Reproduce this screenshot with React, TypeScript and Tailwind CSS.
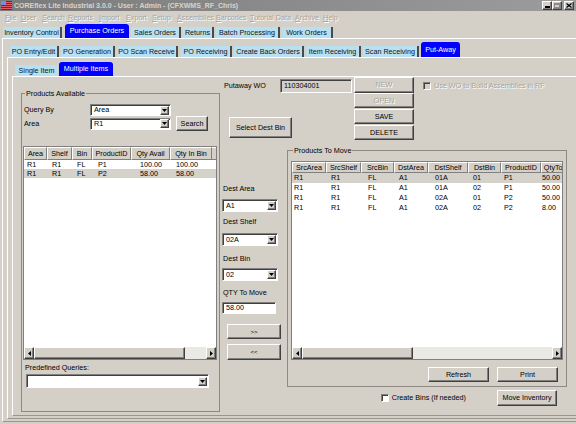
import React from "react";

const RAISED =
  "bg-[#d4d0c8] border border-t-white border-l-white border-r-[#404040] border-b-[#404040] shadow-[inset_-1px_-1px_0_#808080]";
const SUNKEN =
  "border border-t-[#808080] border-l-[#808080] border-r-white border-b-white shadow-[inset_1px_1px_0_#404040]";
const DISABLED_TXT = "text-[#a8a49c] [text-shadow:1px_1px_0_#ffffff]";

function DownArrow() {
  return (
    <svg width="5" height="3" viewBox="0 0 5 3">
      <path d="M0 0H5L2.5 3Z" fill="#000" />
    </svg>
  );
}
function LeftArrow() {
  return (
    <svg width="3" height="5" viewBox="0 0 3 5">
      <path d="M3 0V5L0 2.5Z" fill="#000" />
    </svg>
  );
}
function RightArrow() {
  return (
    <svg width="3" height="5" viewBox="0 0 3 5">
      <path d="M0 0V5L3 2.5Z" fill="#000" />
    </svg>
  );
}

function Combo({ value, className }: { value: string; className: string }) {
  return (
    <div className={`flex items-center bg-white shrink-0 ${SUNKEN} ${className}`}>
      <span className="flex-1 pl-[3px] whitespace-nowrap overflow-hidden">{value}</span>
      <div className={`w-[9px] h-[9px] mr-[1px] flex items-center justify-center shrink-0 ${RAISED}`}>
        <DownArrow />
      </div>
    </div>
  );
}

function Btn({
  children,
  className,
  disabled,
}: {
  children: React.ReactNode;
  className: string;
  disabled?: boolean;
}) {
  return (
    <div
      className={`flex items-center justify-center whitespace-nowrap shrink-0 ${RAISED} ${
        disabled ? DISABLED_TXT : "text-black"
      } ${className}`}
    >
      {children}
    </div>
  );
}

function Check({ disabled }: { disabled?: boolean }) {
  return (
    <div
      className={`w-[8px] h-[8px] shrink-0 ${disabled ? "bg-[#d4d0c8]" : "bg-white"} ${SUNKEN}`}
    />
  );
}

type TabDef = { label: string; cls: string; active?: boolean; sep?: boolean };

function Tab({ t }: { t: TabDef }) {
  if (t.active)
    return (
      <div
        className={`h-full flex items-center justify-center whitespace-nowrap shrink-0 bg-[#0000ff] text-white rounded-t-[3px] ${t.cls}`}
      >
        {t.label}
      </div>
    );
  return (
    <div
      className={`h-[11px] flex items-center justify-center whitespace-nowrap shrink-0 bg-[#b9e0f1] text-[#111] ${
        t.sep === false ? "" : "border-r-2 border-r-[#4a4a4a]"
      } ${t.cls}`}
    >
      {t.label}
    </div>
  );
}

const MAIN_TABS: TabDef[] = [
  { label: "Inventory Control", cls: "w-[59px] mr-[3px]" },
  { label: "Purchase Orders", cls: "w-[64px] mr-[2px]", active: true },
  { label: "Sales Orders", cls: "w-[50px] mr-[2px]" },
  { label: "Returns", cls: "w-[31px] mr-[2px]" },
  { label: "Batch Processing", cls: "w-[64px] mr-[2px]" },
  { label: "Work Orders", cls: "w-[51px]" },
];

const SUB_TABS: TabDef[] = [
  { label: "PO Entry/Edit", cls: "w-[49px] mr-[2px]" },
  { label: "PO Generation", cls: "w-[54px] mr-[2px]" },
  { label: "PO Scan Receive", cls: "w-[61px] mr-[3px]" },
  { label: "PO Receiving", cls: "w-[51px] mr-[2px]" },
  { label: "Create Back Orders", cls: "w-[70px] mr-[2px]" },
  { label: "Item Receiving", cls: "w-[55px] mr-[2px]" },
  { label: "Scan Receiving", cls: "w-[56px] mr-[2px]" },
  { label: "Put-Away", cls: "w-[39px]", active: true },
];

const ITEM_TABS: TabDef[] = [
  { label: "Single Item", cls: "w-[43px] mr-[1px]", sep: false },
  { label: "Multiple Items", cls: "w-[54px]", active: true },
];

const MENU: [string, string][] = [
  ["File", "w-[16px]"],
  ["User", "w-[21px]"],
  ["Search", "w-[26px]"],
  ["Reports", "w-[31px]"],
  ["Import", "w-[27px]"],
  ["Export", "w-[26px]"],
  ["Setup", "w-[25px]"],
  ["Assemblies", "w-[39px]"],
  ["Barcodes", "w-[34px]"],
  ["Tutorial Data", "w-[45px]"],
  ["Archive", "w-[28px]"],
  ["Help", "w-[20px]"],
];

type Col = { label: string; w: string; pl: string };

function Table({
  cols,
  rows,
  sel,
  headH,
  rowH,
  thumb,
  className,
}: {
  cols: Col[];
  rows: string[][];
  sel: number;
  headH: string;
  rowH: string;
  thumb: string;
  className: string;
}) {
  const cellHead =
    "h-full flex items-center justify-center whitespace-nowrap overflow-hidden shrink-0 border border-t-white border-l-white border-r-[#808080] border-b-[#808080]";
  return (
    <div className={`flex flex-col bg-white border border-[#808080] overflow-hidden shrink-0 ${className}`}>
      <div className={`flex shrink-0 bg-[#d4d0c8] overflow-hidden ${headH}`}>
        {cols.map((c) => (
          <div key={c.label} className={`${cellHead} ${c.w}`}>
            {c.label}
          </div>
        ))}
        <div className="flex-1 h-full border-t border-t-white border-b border-b-[#808080]" />
      </div>
      {rows.map((r, i) => (
        <div
          key={i}
          className={`flex shrink-0 overflow-hidden ${rowH} ${i === sel ? "bg-[#d5d2cc]" : "bg-white"}`}
        >
          {r.map((v, j) => (
            <div
              key={j}
              className={`${cols[j].w} ${cols[j].pl} shrink-0 flex items-center whitespace-nowrap overflow-hidden`}
            >
              {v}
            </div>
          ))}
        </div>
      ))}
      <div className="flex-1" />
      <div className="h-[12px] flex shrink-0 bg-[#ebe9e5]">
        <div className={`w-[10px] h-full flex items-center justify-center shrink-0 ${RAISED}`}>
          <LeftArrow />
        </div>
        <div className={`${thumb} h-full shrink-0 ${RAISED}`} />
        <div className="flex-1" />
        <div className={`w-[10px] h-full flex items-center justify-center shrink-0 ${RAISED}`}>
          <RightArrow />
        </div>
      </div>
    </div>
  );
}

const LEFT_COLS: Col[] = [
  { label: "Area", w: "w-[23px]", pl: "pl-[3px]" },
  { label: "Shelf", w: "w-[25px]", pl: "pl-[5px]" },
  { label: "Bin", w: "w-[20px]", pl: "pl-[5px]" },
  { label: "ProductID", w: "w-[39px]", pl: "pl-[6px]" },
  { label: "Qty Avail", w: "w-[39px]", pl: "pl-[9px]" },
  { label: "Qty In Bin", w: "w-[42px]", pl: "pl-[6px]" },
];
const LEFT_ROWS = [
  ["R1", "R1", "FL", "P1", "100.00", "100.00"],
  ["R1", "R1", "FL", "P2", "58.00", "58.00"],
];

const RIGHT_COLS: Col[] = [
  { label: "SrcArea", w: "w-[34px]", pl: "pl-[2px]" },
  { label: "SrcShelf", w: "w-[35px]", pl: "pl-[5px]" },
  { label: "SrcBin", w: "w-[33px]", pl: "pl-[7px]" },
  { label: "DstArea", w: "w-[34px]", pl: "pl-[5px]" },
  { label: "DstShelf", w: "w-[40px]", pl: "pl-[7px]" },
  { label: "DstBin", w: "w-[33px]", pl: "pl-[5px]" },
  { label: "ProductID", w: "w-[40px]", pl: "pl-[3px]" },
  { label: "QtyToMove", w: "w-[42px]", pl: "pl-[1px]" },
];
const RIGHT_ROWS = [
  ["R1", "R1", "FL", "A1", "01A", "01", "P1", "50.00"],
  ["R1", "R1", "FL", "A1", "01A", "02", "P1", "50.00"],
  ["R1", "R1", "FL", "A1", "02A", "01", "P2", "50.00"],
  ["R1", "R1", "FL", "A1", "02A", "02", "P2", "8.00"],
];

function TitleBar() {
  return (
    <div className="h-[11px] shrink-0 flex items-center bg-gradient-to-r from-[#7b7b7b] to-[#9c9c9c]">
      <svg width="11" height="9" viewBox="0 0 11 9" className="ml-[1px] shrink-0">
        <rect width="11" height="9" fill="#1c3c9c" />
        <rect x="0" y="0" width="5" height="4" fill="#7090e8" />
        <path d="M5 1.5H11M5 3.5H11M0 5.5H11M0 7.5H11" stroke="#e05a6a" strokeWidth="1" />
      </svg>
      <span className="ml-[2px] font-bold text-[7px] text-[#d8d4cc] whitespace-nowrap">
        COREflex Lite Industrial 3.0.0 - User : Admin - (CFXWMS_RF_Chris)
      </span>
      <div className="flex-1" />
      <div className={`w-[10px] h-[9px] flex items-end justify-center pb-[1px] ${RAISED}`}>
        <div className="w-[5px] h-[2px] bg-black" />
      </div>
      <div className={`w-[10px] h-[9px] flex items-center justify-center ${RAISED}`}>
        <div className="w-[6px] h-[5px] border border-[#8a8a8a] border-t-2" />
      </div>
      <div className={`w-[10px] h-[9px] ml-[2px] mr-[2px] flex items-center justify-center ${RAISED}`}>
        <svg width="6" height="5" viewBox="0 0 6 5">
          <path d="M0.5 0.5L5.5 4.5M5.5 0.5L0.5 4.5" stroke="#000" strokeWidth="1.3" />
        </svg>
      </div>
    </div>
  );
}

function MenuBar() {
  return (
    <div className="h-[13px] shrink-0 flex items-center pl-[5px]">
      {MENU.map(([m, w]) => (
        <span key={m} className={`${w} shrink-0 whitespace-nowrap ${DISABLED_TXT}`}>
          <span className="underline">{m[0]}</span>
          {m.slice(1)}
        </span>
      ))}
    </div>
  );
}

export default function App() {
  return (
    <div className="w-[576px] h-[424px] bg-[#d4d0c8] flex flex-col overflow-hidden font-['Liberation_Sans',Arial,sans-serif] text-[7.2px] leading-none text-black select-none">
      <TitleBar />
      <MenuBar />
      <div className="h-[14px] shrink-0 flex items-end pl-[3px]">
        {MAIN_TABS.map((t) => (
          <Tab key={t.label} t={t} />
        ))}
      </div>
      <div className="flex-1 min-h-0 flex flex-col ml-[2px] mb-[2px] border-t border-l border-t-white border-l-white border-b border-b-[#9a968e]">
        <div className="h-[15px] mt-[3px] shrink-0 flex items-end pl-[7px]">
          {SUB_TABS.map((t) => (
            <Tab key={t.label} t={t} />
          ))}
        </div>
        <div className="flex-1 min-h-0 flex flex-col ml-[4px] mb-[2px] border-t border-l border-t-white border-l-white border-b border-b-[#9a968e]">
          <div className="h-[14px] mt-[4px] shrink-0 flex items-end pl-[7px]">
            {ITEM_TABS.map((t) => (
              <Tab key={t.label} t={t} />
            ))}
          </div>
          <div className="flex-1 min-h-0 flex ml-[4px] mb-[2px] border-t border-l border-t-white border-l-white border-b border-b-[#9a968e]">
            {/* Products Available */}
            <fieldset className="ml-[8px] mt-[12px] w-[199px] h-[323px] shrink-0 border border-[#8e8a83]">
              <legend className="ml-[3px] px-[1px] leading-[9px]">Products Available</legend>
              <div className="flex flex-col px-[1px]">
                <div className="flex items-center h-[12px] mt-[6px]">
                  <span className="w-[67px] pl-[1px] shrink-0">Query By</span>
                  <Combo value="Area" className="w-[81px] h-[12px]" />
                </div>
                <div className="flex items-center h-[15px]">
                  <span className="w-[67px] pl-[1px] shrink-0">Area</span>
                  <Combo value="R1" className="w-[81px] h-[12px]" />
                  <Btn className="ml-[5px] w-[32px] h-[15px]">Search</Btn>
                </div>
                <Table
                  cols={LEFT_COLS}
                  rows={LEFT_ROWS}
                  sel={1}
                  headH="h-[13px]"
                  rowH="h-[9px]"
                  thumb="w-[151px]"
                  className="mt-[15px] w-[194px] h-[214px]"
                />
                <span className="mt-[3px] h-[9px] pl-[2px] flex items-center">Predefined Queries:</span>
                <Combo value="" className="mt-[2px] ml-[3px] w-[183px] h-[14px]" />
              </div>
            </fieldset>

            {/* Right side */}
            <div className="flex-1 flex flex-col min-w-0">
              <div className="flex h-[63px] shrink-0">
                <div className="w-[134px] shrink-0 flex flex-col">
                  <div className="mt-[2px] h-[14px] flex items-center">
                    <span className="w-[60px] pl-[4px] shrink-0">Putaway WO</span>
                    <div className={`w-[72px] h-[14px] flex items-center pl-[3px] bg-[#d4d0c8] ${SUNKEN}`}>
                      110304001
                    </div>
                  </div>
                  <Btn className="mt-[24px] ml-[9px] w-[63px] h-[21px]">Select Dest Bin</Btn>
                </div>
                <div className="w-[60px] shrink-0 flex flex-col">
                  <Btn disabled className="w-[60px] h-[16px]">
                    NEW
                  </Btn>
                  <Btn disabled className="w-[60px] h-[15px]">
                    OPEN
                  </Btn>
                  <Btn className="mt-[1px] w-[60px] h-[15px]">SAVE</Btn>
                  <Btn className="mt-[1px] w-[60px] h-[15px]">DELETE</Btn>
                </div>
                <div className="ml-[9px] mt-[4px] h-[9px] flex items-center gap-[3px]">
                  <Check disabled />
                  <span className={`whitespace-nowrap ${DISABLED_TXT}`}>Use WO to Build Assemblies in RF</span>
                </div>
              </div>

              <div className="flex flex-1 min-h-0">
                <div className="ml-[2px] w-[60px] shrink-0 flex flex-col pt-[44px]">
                  <span className="h-[9px] pl-[1px] flex items-center">Dest Area</span>
                  <Combo value="A1" className="mt-[6px] w-[56px] h-[13px]" />
                  <span className="mt-[5px] h-[9px] pl-[1px] flex items-center">Dest Shelf</span>
                  <Combo value="02A" className="mt-[7px] w-[56px] h-[13px]" />
                  <span className="mt-[8px] h-[9px] pl-[1px] flex items-center">Dest Bin</span>
                  <Combo value="02" className="mt-[5px] w-[56px] h-[13px]" />
                  <span className="mt-[7px] h-[9px] pl-[1px] flex items-center">QTY To Move</span>
                  <div className={`mt-[5px] w-[54px] h-[12px] bg-white flex items-center pl-[3px] ${SUNKEN}`}>
                    58.00
                  </div>
                  <Btn className="mt-[10px] ml-[5px] w-[54px] h-[15px] text-[6px]">&gt;&gt;</Btn>
                  <Btn className="mt-[5px] ml-[5px] w-[54px] h-[16px] text-[6px]">&lt;&lt;</Btn>
                </div>

                <div className="ml-[5px] w-[280px] shrink-0 flex flex-col">
                  <fieldset className="mt-[6px] w-[280px] shrink-0 border border-[#8e8a83] pb-[4px]">
                    <legend className="ml-[5px] px-[1px] leading-[9px]">Products To Move</legend>
                    <div className="flex flex-col">
                      <Table
                        cols={RIGHT_COLS}
                        rows={RIGHT_ROWS}
                        sel={0}
                        headH="h-[11px]"
                        rowH="h-[10px]"
                        thumb="w-[111px]"
                        className="mt-[6px] ml-[3px] w-[272px] h-[199px]"
                      />
                      <div className="mt-[7px] h-[15px] flex justify-end gap-[8px] pr-[8px]">
                        <Btn className="w-[61px] h-[15px]">Refresh</Btn>
                        <Btn className="w-[61px] h-[15px]">Print</Btn>
                      </div>
                    </div>
                  </fieldset>
                  <div className="mt-[3px] h-[16px] flex items-center justify-end pr-[10px]">
                    <div className="flex items-center gap-[3px] mr-[31px]">
                      <Check />
                      <span className="whitespace-nowrap">Create Bins (If needed)</span>
                    </div>
                    <Btn className="w-[60px] h-[16px]">Move Inventory</Btn>
                  </div>
                </div>
              </div>
            </div>
          </div>
        </div>
      </div>
    </div>
  );
}
